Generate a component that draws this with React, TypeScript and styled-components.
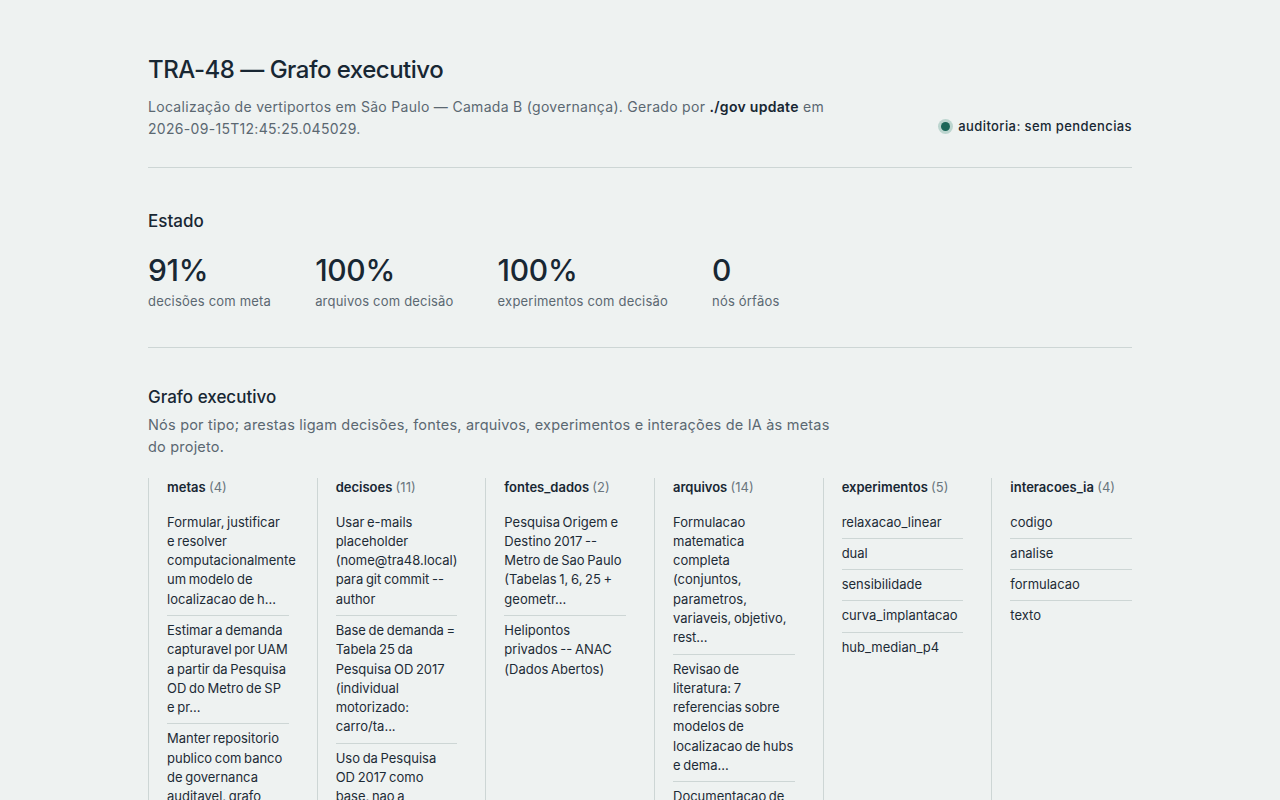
import styled, { createGlobalStyle } from 'styled-components'

const GlobalStyle = createGlobalStyle`
  html, body {
    margin: 0;
    padding: 0;
    background: #eef2f1;
  }
  body {
    font-family: Inter, "Noto Sans", "DejaVu Sans", sans-serif;
    color: #1b2935;
    -webkit-font-smoothing: antialiased;
  }
`

type Stat = { value: string; label: string }

type NodeGroup = { kind: string; count: number; items: string[] }

const stats: Stat[] = [
  { value: '91%', label: 'decisões com meta' },
  { value: '100%', label: 'arquivos com decisão' },
  { value: '100%', label: 'experimentos com decisão' },
  { value: '0', label: 'nós órfãos' },
]

const groups: NodeGroup[] = [
  {
    kind: 'metas',
    count: 4,
    items: [
      'Formular, justificar e resolver computacionalmente um modelo de localizacao de h...',
      'Estimar a demanda capturavel por UAM a partir da Pesquisa OD do Metro de SP e pr...',
      'Manter repositorio publico com banco de governanca auditavel, grafo executivo e...',
      'Comparar cenarios de implantacao faseada de vertiportos na RMSP...',
    ],
  },
  {
    kind: 'decisoes',
    count: 11,
    items: [
      'Usar e-mails placeholder (nome@tra48.local) para git commit --author',
      'Base de demanda = Tabela 25 da Pesquisa OD 2017 (individual motorizado: carro/ta...',
      'Uso da Pesquisa OD 2017 como base, nao a Pesquisa OD 2023 (microdados ainda...',
      'Modelo p-hub median com alocacao simples...',
      'Solver HiGHS via PuLP para todas as instancias...',
    ],
  },
  {
    kind: 'fontes_dados',
    count: 2,
    items: [
      'Pesquisa Origem e Destino 2017 -- Metro de Sao Paulo (Tabelas 1, 6, 25 + geometr...',
      'Helipontos privados -- ANAC (Dados Abertos)',
    ],
  },
  {
    kind: 'arquivos',
    count: 14,
    items: [
      'Formulacao matematica completa (conjuntos, parametros, variaveis, objetivo, rest...',
      'Revisao de literatura: 7 referencias sobre modelos de localizacao de hubs e dema...',
      'Documentacao de dados: origem, tratamento e limitacoes...',
      'Script de relaxacao linear...',
    ],
  },
  {
    kind: 'experimentos',
    count: 5,
    items: ['relaxacao_linear', 'dual', 'sensibilidade', 'curva_implantacao', 'hub_median_p4'],
  },
  {
    kind: 'interacoes_ia',
    count: 4,
    items: ['codigo', 'analise', 'formulacao', 'texto'],
  },
]

export default function App() {
  return (
    <>
      <GlobalStyle />
      <Page>
        <Header>
          <HeaderText>
            <Title>TRA-48 — Grafo executivo</Title>
            <Lead>
              Localização de vertiportos em São Paulo — Camada B (governança). Gerado por{' '}
              <Strong>./gov update</Strong> em 2026-09-15T12:45:25.045029.
            </Lead>
          </HeaderText>
          <AuditBadge>
            <StatusDot />
            auditoria: sem pendencias
          </AuditBadge>
        </Header>

        <Section>
          <SectionTitle>Estado</SectionTitle>
          <StatRow>
            {stats.map((s) => (
              <StatItem key={s.label}>
                <StatValue>{s.value}</StatValue>
                <StatLabel>{s.label}</StatLabel>
              </StatItem>
            ))}
          </StatRow>
        </Section>

        <Section $last>
          <SectionTitle>Grafo executivo</SectionTitle>
          <SectionLead>
            Nós por tipo; arestas ligam decisões, fontes, arquivos, experimentos e interações de IA
            às metas do projeto.
          </SectionLead>
          <GroupGrid>
            {groups.map((g) => (
              <GroupColumn key={g.kind}>
                <GroupHead>
                  {g.kind} <GroupCount>({g.count})</GroupCount>
                </GroupHead>
                <NodeList>
                  {g.items.map((item) => (
                    <NodeItem key={item}>{item}</NodeItem>
                  ))}
                </NodeList>
              </GroupColumn>
            ))}
          </GroupGrid>
        </Section>
      </Page>
    </>
  )
}

const Page = styled.main`
  max-width: 984px;
  margin: 0 auto;
  padding: 53px 0 48px;
`

const Header = styled.header`
  display: flex;
  justify-content: space-between;
  align-items: flex-end;
  gap: 32px;
  padding-bottom: 27px;
  border-bottom: 1px solid #cdd6d5;
`

const HeaderText = styled.div`
  display: flex;
  flex-direction: column;
  gap: 9px;
`

const Title = styled.h1`
  margin: 0;
  font-size: 24px;
  line-height: 34px;
  font-weight: 500;
  letter-spacing: -0.5px;
  color: #182733;
`

const Lead = styled.p`
  margin: 0;
  max-width: 690px;
  font-size: 14px;
  line-height: 22px;
  letter-spacing: 0.3px;
  color: #5b6871;
`

const Strong = styled.strong`
  font-weight: 600;
  color: #182733;
`

const AuditBadge = styled.div`
  display: flex;
  align-items: center;
  gap: 8px;
  margin-bottom: 6px;
  font-size: 13px;
  font-weight: 500;
  letter-spacing: 0.4px;
  color: #182733;
  white-space: nowrap;
`

const StatusDot = styled.span`
  width: 9px;
  height: 9px;
  border-radius: 50%;
  background: #1b6658;
  box-shadow: 0 0 0 3px #bcd5cf;
  margin-left: 3px;
`

const Section = styled.section<{ $last?: boolean }>`
  padding: ${(p) => (p.$last ? '37px 0 48px' : '41px 0 36px')};
  border-bottom: ${(p) => (p.$last ? 'none' : '1px solid #cdd6d5')};
`

const SectionTitle = styled.h2`
  margin: 0;
  font-size: 17px;
  line-height: 24px;
  font-weight: 500;
  color: #182733;
`

const SectionLead = styled.p`
  margin: 5px 0 0;
  max-width: 690px;
  font-size: 14.5px;
  line-height: 22px;
  letter-spacing: 0.2px;
  color: #5b6871;
`

const StatRow = styled.div`
  display: flex;
  gap: 44px;
  margin-top: 20px;
`

const StatItem = styled.div`
  display: flex;
  flex-direction: column;
  gap: 5px;
`

const StatValue = styled.div`
  font-size: 30px;
  line-height: 34px;
  font-weight: 500;
  letter-spacing: -0.3px;
  color: #182733;
`

const StatLabel = styled.div`
  font-size: 13px;
  line-height: 19px;
  letter-spacing: 0.2px;
  color: #5b6871;
`

const GroupGrid = styled.div`
  display: grid;
  grid-template-columns: repeat(6, minmax(0, 1fr));
  gap: 28px;
  margin-top: 20px;
`

const GroupColumn = styled.div`
  border-left: 1px solid #cdd6d5;
  padding-left: 18px;
  min-height: 340px;
`

const GroupHead = styled.div`
  font-size: 13px;
  line-height: 19.5px;
  font-weight: 600;
  color: #182733;
  margin-bottom: 10px;
`

const GroupCount = styled.span`
  font-weight: 400;
  color: #6a767e;
`

const NodeList = styled.ul`
  list-style: none;
  margin: 0;
  padding: 0;
`

const NodeItem = styled.li`
  font-size: 13px;
  line-height: 19.3px;
  word-spacing: -1px;
  color: #1d2b36;
  padding: 5px 0 6px;
  border-bottom: 1px solid #cdd6d5;

  &:last-child {
    border-bottom: none;
  }
`
